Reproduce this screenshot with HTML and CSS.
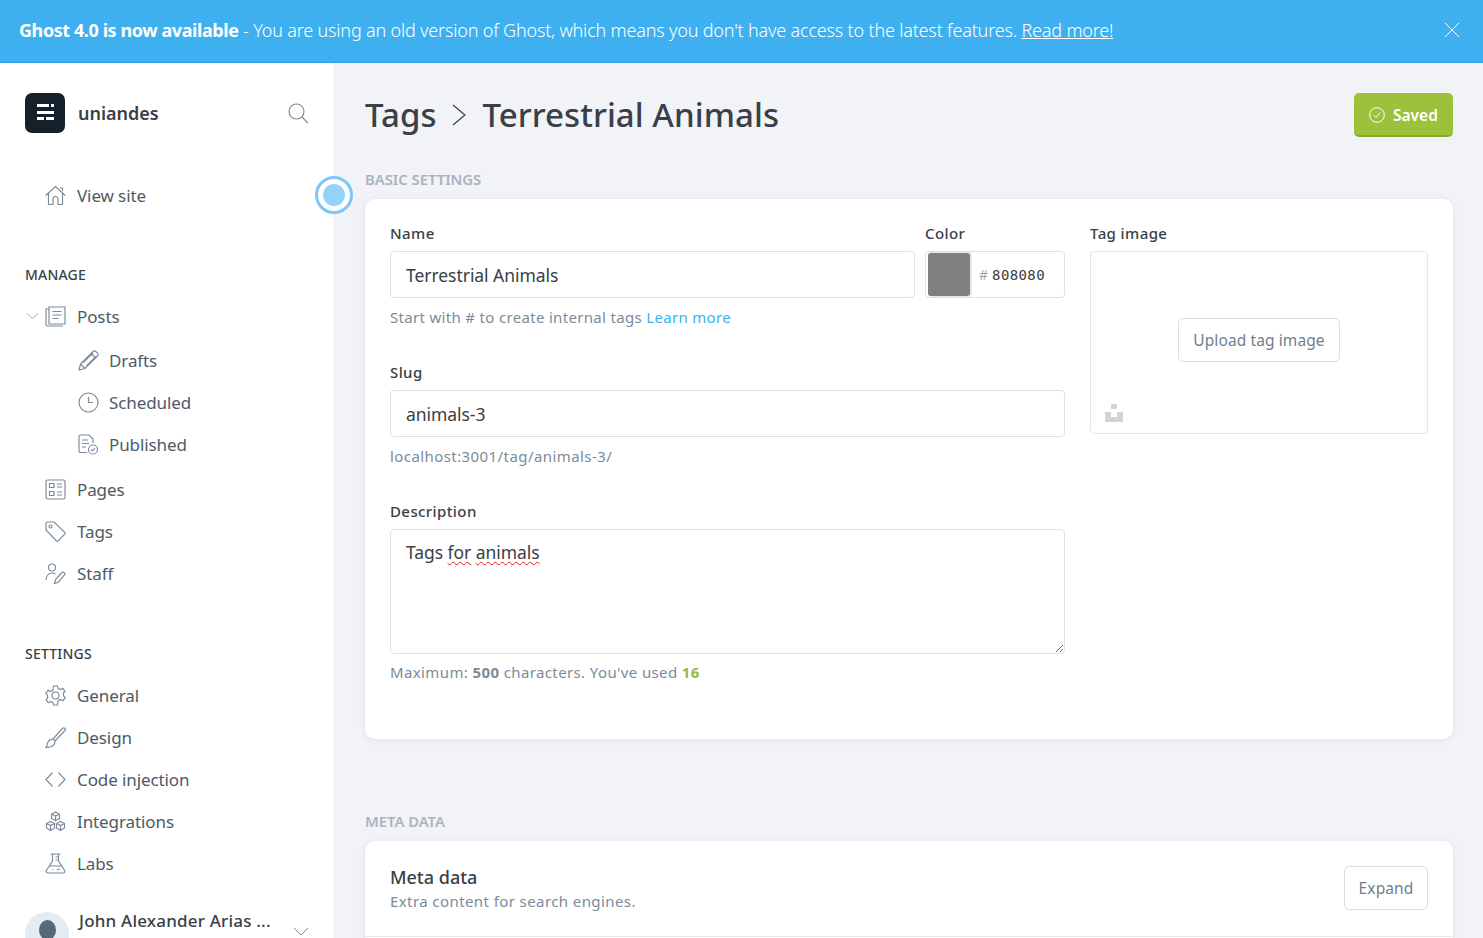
FILE: index.html
```html
<!DOCTYPE html>
<html>

<head>
    <meta charset="UTF-8">
    <title>Tags - Terrestrial Animals</title>
    <link rel="stylesheet" href="styles.css">
</head>

<body>
    <div class="banner">
        <p class="banner-text"><b>Ghost 4.0 is now available</b> - You are using an old version of Ghost, which means you don't have access to the latest features. <a href="#">Read more!</a></p>
        <svg class="banner-close" viewBox="0 0 16 16"><path d="M1 1l14 14M15 1L1 15" /></svg>
    </div>

    <div class="app">
        <span class="pulse"></span>
        <nav class="sidebar">
            <div class="brand">
                <svg class="brand-logo" viewBox="0 0 40 40">
                    <rect width="40" height="40" rx="7" fill="#15212a" />
                    <path fill="#fff" d="M12 11h12v3H12zM26 11h3v3h-3zM12 18h17v3H12zM12 24h7v3h-7zM21 24h8v3h-8z" />
                </svg>
                <span class="brand-name">uniandes</span>
                <svg class="brand-search icon" viewBox="0 0 21 21"><circle cx="8.5" cy="8.5" r="7.5" /><path d="M14 14l6 6" /></svg>
            </div>

            <a class="nav-item nav-view" href="#">
                <svg class="icon" viewBox="0 0 21 21"><path d="M.7 10.500L10.500 1.500l9.800 9M3.500 8.500V19.500H8V14a2.500 2.500 0 0 1 5 0v5.500h4.500V8.500M15 3h2.500v3" /></svg>
                View site
            </a>

            <h4 class="nav-title nav-title-manage">MANAGE</h4>
            <a class="nav-item" href="#">
                <svg class="nav-caret" viewBox="0 0 14 8"><path d="M1 1l6 6 6-6" /></svg>
                <svg class="icon" viewBox="0 0 21 21"><path d="M4 1h16v17H4zM7.500 5.500h9M7.500 9h9M7.500 12.500h6M4 3H1v15.500A1.500 1.500 0 0 0 2.500 20H18" /></svg>
                Posts
            </a>
            <div class="subnav">
                <a class="nav-item" href="#">
                    <svg class="icon" viewBox="0 0 21 21"><path d="M1 20l1.500-6L15 1.500a2 2 0 0 1 2.800 0l1.700 1.700a2 2 0 0 1 0 2.800L7 18.500zM2.500 14L7 18.500M13 3.500L17.500 8M5 12.500L15 3M8.500 16L18 6.500" /></svg>
                    Drafts
                </a>
                <a class="nav-item" href="#">
                    <svg class="icon" viewBox="0 0 21 21"><circle cx="10.500" cy="10.500" r="9.500" /><path d="M10.500 5v5.500H15" /></svg>
                    Scheduled
                </a>
                <a class="nav-item" href="#">
                    <svg class="icon" viewBox="0 0 21 21"><path d="M9 18.500H2.500A1.500 1.500 0 0 1 1 17V2.500A1.500 1.500 0 0 1 2.500 1h8.500l4 4v4M4 6h6M4 9.500h7M4 13h4" /><circle cx="15" cy="15.500" r="4.500" /><path d="M13 15.500l1.500 1.500 2.500-3" /></svg>
                    Published
                </a>
            </div>
            <a class="nav-item" href="#">
                <svg class="icon" viewBox="0 0 21 21"><rect x="1" y="1" width="19" height="19" rx="1.500" /><path d="M4.500 4.500h4.500v4H4.500zM4.500 12.500h4.500v4H4.500zM12 5h5M12 8h5M12 13h5M12 16h5" /></svg>
                Pages
            </a>
            <a class="nav-item" href="#">
                <svg class="icon" viewBox="0 0 21 21"><path d="M1 2.500A1.500 1.500 0 0 1 2.500 1H9l11 10.500a1.500 1.500 0 0 1 0 1.500l-7 7a1.500 1.500 0 0 1-1.500 0L1 9z" /><circle cx="5.500" cy="5.500" r="1.500" /></svg>
                Tags
            </a>
            <a class="nav-item" href="#">
                <svg class="icon" viewBox="0 0 21 21"><circle cx="7" cy="4.500" r="3.500" /><path d="M1 17c0-4 2.500-7 6-7 1.500 0 2.500.3 3.500 1M9.500 20.500l1-4 6.500-7a1.800 1.800 0 0 1 2.500 2.500l-6.500 7.500z" /></svg>
                Staff
            </a>

            <h4 class="nav-title nav-title-settings">SETTINGS</h4>
            <a class="nav-item" href="#">
                <svg class="icon" viewBox="0 0 21 21"><circle cx="10.500" cy="10.500" r="3.500" /><path d="M8.500 1h4l.6 2.600 2.300 1 2.300-1.300 2.300 3-1.700 2 .2 2.400 1.700 2-2.300 3-2.300-1.300-2.300 1L12.500 20h-4l-.6-2.600-2.300-1-2.300 1.300-2.300-3 1.700-2-.2-2.400-1.700-2 2.300-3 2.300 1.300 2.300-1z" /></svg>
                General
            </a>
            <a class="nav-item" href="#">
                <svg class="icon" viewBox="0 0 21 21"><path d="M1 20.500c1-1 1-3.500 2-5.500 1-2 3-3 5-3l2 2c0 3-2 5-4 5.700-2 .6-4 .8-5 .8zM8 12L17.500 1.500a1.600 1.600 0 0 1 2.500 2L10 14" /></svg>
                Design
            </a>
            <a class="nav-item" href="#">
                <svg class="icon" viewBox="0 0 21 21"><path d="M7.500 3.500L1 10.500l6.500 7M13.500 3.500l6.500 7-6.500 7" /></svg>
                Code injection
            </a>
            <a class="nav-item" href="#">
                <svg class="icon" viewBox="0 0 21 21"><path d="M10.500 1l4 2v4.500l-4 2-4-2V3zM6.500 3l4 2 4-2M10.500 5v4.500M5.500 10.500l4 2V17l-4 2.500-4-2.500v-4.500zM1.500 12.500l4 2 4-2M5.500 14.500v5M15.500 10.500l4 2V17l-4 2.500-4-2.500v-4.500zM11.500 12.500l4 2 4-2M15.500 14.500v5" /></svg>
                Integrations
            </a>
            <a class="nav-item" href="#">
                <svg class="icon" viewBox="0 0 21 21"><path d="M5.500 1h10M7.500 1v7L1.300 17.500A1.700 1.700 0 0 0 3 20h15a1.700 1.700 0 0 0 1.700-2.500L13.500 8V1M4.500 13h12M7.500 16.500h1M12 16.500h3M10.500 4h3M10.500 7h3" /></svg>
                Labs
            </a>

            <div class="user">
                <div class="user-avatar"><span class="user-head"></span></div>
                <span class="user-name">John Alexander Arias ...</span>
                <svg class="user-caret" viewBox="0 0 16 9"><path d="M1 1l7 7 7-7" /></svg>
            </div>
        </nav>

        <main class="content">
            <div class="page-head">
                <h1 class="page-title">Tags
                    <svg class="crumb-sep" viewBox="0 0 14 22"><path d="M1 1l12 10L1 21" /></svg>
                    Terrestrial Animals</h1>
                <button class="btn-saved">
                    <svg viewBox="0 0 16 16"><circle cx="8" cy="8" r="7.300" /><path d="M4.800 8.300l2.200 2.200 4.200-5" /></svg>
                    Saved
                </button>
            </div>

            <h3 class="section-title">BASIC SETTINGS</h3>
            <section class="card card-basic">
                <div class="form-main">
                    <div class="form-row">
                        <div class="field field-name">
                            <label>Name</label>
                            <input class="text-input" type="text" value="Terrestrial Animals">
                        </div>
                        <div class="field field-color">
                            <label>Color</label>
                            <div class="color-input">
                                <span class="color-swatch"></span>
                                <span class="color-hash">#</span>
                                <span class="color-value">808080</span>
                            </div>
                        </div>
                    </div>
                    <p class="hint hint-name">Start with # to create internal tags <a href="#">Learn more</a></p>

                    <div class="field">
                        <label>Slug</label>
                        <input class="text-input" type="text" value="animals-3">
                    </div>
                    <p class="hint hint-slug">localhost:3001/tag/animals-3/</p>

                    <div class="field">
                        <label>Description</label>
                        <div class="text-area">Tags <span class="misspelt">for</span> <span class="misspelt">animals</span></div>
                    </div>
                    <p class="hint hint-count">Maximum: <b>500</b> characters. You've used <b class="count">16</b></p>
                </div>

                <div class="field form-image">
                    <label>Tag image</label>
                    <div class="image-box">
                        <button class="btn-plain btn-upload">Upload tag image</button>
                        <svg class="unsplash" viewBox="0 0 18 18"><path d="M6 0h6v5H6zM0 8h6v5h6V8h6v10H0z" /></svg>
                    </div>
                </div>
            </section>

            <h3 class="section-title section-meta">META DATA</h3>
            <section class="card card-meta">
                <div class="meta-row">
                    <div>
                        <h4 class="meta-title">Meta data</h4>
                        <p class="meta-sub">Extra content for search engines.</p>
                    </div>
                    <button class="btn-plain btn-expand">Expand</button>
                </div>
            </section>
        </main>
    </div>
</body>

</html>
```

FILE: styles.css
```css
* {
    box-sizing: border-box;
}

html,
body {
    margin: 0;
    padding: 0;
    height: 100%;
    overflow: hidden;
    font-family: "Noto Sans", "Open Sans", sans-serif;
    color: #394047;
    background-color: #f1f3f7;
}

a {
    text-decoration: none;
    color: inherit;
}

/* banner */

.banner {
    display: flex;
    align-items: center;
    justify-content: space-between;
    height: 63px;
    padding: 0 23px 2px 19px;
    background-color: #3eb0ef;
    border-bottom: 1px solid #2aa3ea;
    color: #fff;
}

.banner-text {
    margin: 0;
    font-size: 18px;
    font-weight: 300;
    letter-spacing: -0.18px;
}

.banner-text b {
    font-weight: 700;
    letter-spacing: -0.42px;
}

.banner-text a {
    text-decoration: underline;
}

.banner-close {
    width: 16px;
    height: 16px;
    fill: none;
    stroke: #fff;
    stroke-width: 1;
}

/* sidebar */

.app {
    position: relative;
    display: flex;
    height: 875px;
}

.sidebar {
    flex: 0 0 335px;
    padding: 30px 25px 0;
    background-color: #fff;
    border-right: 1px solid #e3e8ef;
    overflow: hidden;
}

.icon {
    width: 21px;
    height: 21px;
    flex: none;
    fill: none;
    stroke: #7c8b9a;
    stroke-width: 1.150;
}

.brand {
    display: flex;
    align-items: center;
    height: 40px;
    margin-bottom: 41px;
}

.brand-logo {
    width: 40px;
    height: 40px;
    margin-right: 13px;
}

.brand-name {
    flex: 1;
    font-size: 18px;
    font-weight: 600;
    letter-spacing: 0;
}

.nav-item {
    position: relative;
    display: flex;
    align-items: center;
    gap: 11px;
    height: 42px;
    padding-left: 20px;
    font-size: 17px;
    letter-spacing: -0.1px;
    color: #4d5a66;
}

.nav-view {
    margin-bottom: 49px;
}

.nav-caret {
    position: absolute;
    left: 1px;
    top: 17px;
    width: 13px;
    height: 8px;
    fill: none;
    stroke: #9aa7b2;
    stroke-width: 1;
}

.pulse {
    position: absolute;
    left: 315px;
    top: 113px;
    width: 38px;
    height: 38px;
    padding: 5px;
    border: 3px solid #7dc6f5;
    border-radius: 50%;
    background-color: #fff;
    z-index: 2;
}

.pulse::after {
    content: "";
    display: block;
    width: 22px;
    height: 22px;
    border-radius: 50%;
    background-color: #94d2f8;
}

.nav-title {
    margin: 0;
    font-size: 14px;
    font-weight: 500;
    line-height: 20px;
    letter-spacing: 0.2px;
    color: #394047;
}

.nav-title-manage {
    margin-bottom: 10px;
}

.nav-title-settings {
    margin-top: 50px;
    margin-bottom: 10px;
}

.subnav {
    padding-left: 33px;
    padding-top: 2px;
    padding-bottom: 3px;
}

.subnav .nav-item {
    gap: 10px;
}

.user {
    display: flex;
    margin-top: 28px;
    height: 60px;
}

.user-avatar {
    display: flex;
    justify-content: center;
    width: 44px;
    height: 44px;
    flex: none;
    margin-right: 10px;
    padding-top: 8px;
    border-radius: 50%;
    background-color: #e3ebf3;
    overflow: hidden;
}

.user-head {
    width: 17px;
    height: 20px;
    border-radius: 50%;
    background-color: #546a75;
}

.user-name {
    flex: 1;
    margin-top: -3px;
    font-size: 17px;
    font-weight: 500;
    letter-spacing: 0.2px;
    white-space: nowrap;
}

.user-caret {
    width: 16px;
    height: 9px;
    margin-top: 15px;
    fill: none;
    stroke: #7c8b9a;
    stroke-width: 1;
}

/* main */

.content {
    flex: 1;
    padding: 30px 30px 0;
    overflow: hidden;
}

.page-head {
    display: flex;
    justify-content: space-between;
    align-items: flex-start;
    height: 44px;
    margin-bottom: 32px;
}

.page-title {
    display: flex;
    align-items: center;
    gap: 16px;
    height: 44px;
    margin: 0;
    padding-bottom: 2px;
    font-size: 33px;
    font-weight: 500;
    letter-spacing: 0.05px;
    white-space: nowrap;
}

.crumb-sep {
    width: 14px;
    height: 22px;
    margin-top: 2px;
    fill: none;
    stroke: #394047;
    stroke-width: 1.2;
}

.btn-saved {
    display: flex;
    align-items: center;
    gap: 8px;
    width: 99px;
    height: 44px;
    padding: 2px 0 0 15px;
    font-family: inherit;
    font-size: 15.500px;
    font-weight: 600;
    color: #fff;
    background-color: #9bc23a;
    border: none;
    border-bottom: 2px solid #88ad2e;
    border-radius: 5px;
}

.btn-saved svg {
    width: 16px;
    height: 16px;
    fill: none;
    stroke: #fff;
    stroke-width: 1;
}

.section-title {
    margin: 0 0 10px;
    font-size: 14.800px;
    font-weight: 600;
    line-height: 20px;
    color: #a9b5be;
}

.section-meta {
    margin-top: 72px;
}

.card {
    background-color: #fff;
    border-radius: 10px;
    box-shadow: 0 1px 6px rgba(60, 80, 110, 0.1);
}

.card-basic {
    display: flex;
    gap: 25px;
    height: 540px;
    padding: 25px;
}

.form-main {
    width: 675px;
    flex: none;
}

.form-image {
    flex: 1;
}

.form-row {
    display: flex;
    gap: 10px;
}

.field-name {
    flex: 1;
}

.field-color {
    width: 140px;
}

.field label {
    display: block;
    height: 18px;
    margin-bottom: 9px;
    font-size: 15px;
    font-weight: 500;
    line-height: 18px;
    letter-spacing: 0.4px;
}

.text-input {
    display: block;
    width: 100%;
    height: 47px;
    padding: 0 15px;
    font-family: inherit;
    font-size: 17.500px;
    letter-spacing: -0.05px;
    color: #394047;
    background-color: #fff;
    border: 1px solid #dae2e9;
    border-radius: 4px;
    outline: none;
}

.color-input {
    display: flex;
    align-items: center;
    height: 47px;
    padding: 1px 2px;
    border: 1px solid #dae2e9;
    border-radius: 4px;
}

.color-swatch {
    width: 42px;
    height: 43px;
    margin-right: 9px;
    background-color: #808080;
    border-radius: 3px;
    box-shadow: 1px 0 0 1px #e3e8ef;
}

.color-hash {
    margin-right: 4px;
    font-size: 14px;
    color: #9aa7b2;
}

.color-value {
    font-family: "DejaVu Sans Mono", monospace;
    font-size: 14px;
    letter-spacing: 0.4px;
    color: #394047;
}

.hint {
    height: 20px;
    margin: 9px 0 0;
    font-size: 15px;
    line-height: 20px;
    letter-spacing: 0.32px;
    color: #7c8b9a;
}

.hint-name,
.hint-slug {
    margin-bottom: 36px;
}

.hint-slug {
    letter-spacing: 0.42px;
}

.hint-count {
    margin-top: 8px;
    letter-spacing: 0.38px;
}

.hint a {
    color: #3eb0ef;
}

.hint b {
    font-weight: 700;
}

.hint .count {
    color: #9bb84a;
}

.text-area {
    height: 125px;
    padding: 9px 15px;
    font-size: 17.500px;
    line-height: 26px;
    letter-spacing: -0.05px;
    color: #394047;
    border: 1px solid #dae2e9;
    border-radius: 4px;
    overflow: auto;
    resize: vertical;
}

.misspelt {
    text-decoration: underline wavy #e0202a 1px;
    text-underline-offset: 2px;
}

.image-box {
    position: relative;
    display: flex;
    align-items: center;
    justify-content: center;
    height: 183px;
    padding-bottom: 5px;
    border: 1px solid #e3e8ef;
    border-radius: 4px;
}

.unsplash {
    position: absolute;
    left: 14px;
    bottom: 11px;
    width: 18px;
    height: 18px;
    fill: #d4d4d4;
}

.btn-plain {
    height: 44px;
    padding: 0 14px;
    font-family: inherit;
    font-size: 15.500px;
    letter-spacing: 0.1px;
    color: #6d7f8e;
    background-color: #fff;
    border: 1px solid #d5dfe6;
    border-radius: 5px;
}

.card-meta {
    height: 120px;
}

.meta-row {
    display: flex;
    justify-content: space-between;
    height: 96px;
    padding: 25px;
    border-bottom: 1px solid #e3e8ef;
}

.meta-title {
    margin: 0;
    font-size: 18px;
    font-weight: 500;
    line-height: 22px;
}

.meta-sub {
    margin: 3px 0 0;
    font-size: 15px;
    line-height: 20px;
    letter-spacing: 0.41px;
    color: #7c8b9a;
}

.btn-expand {
    width: 84px;
    padding: 0;
}
```
